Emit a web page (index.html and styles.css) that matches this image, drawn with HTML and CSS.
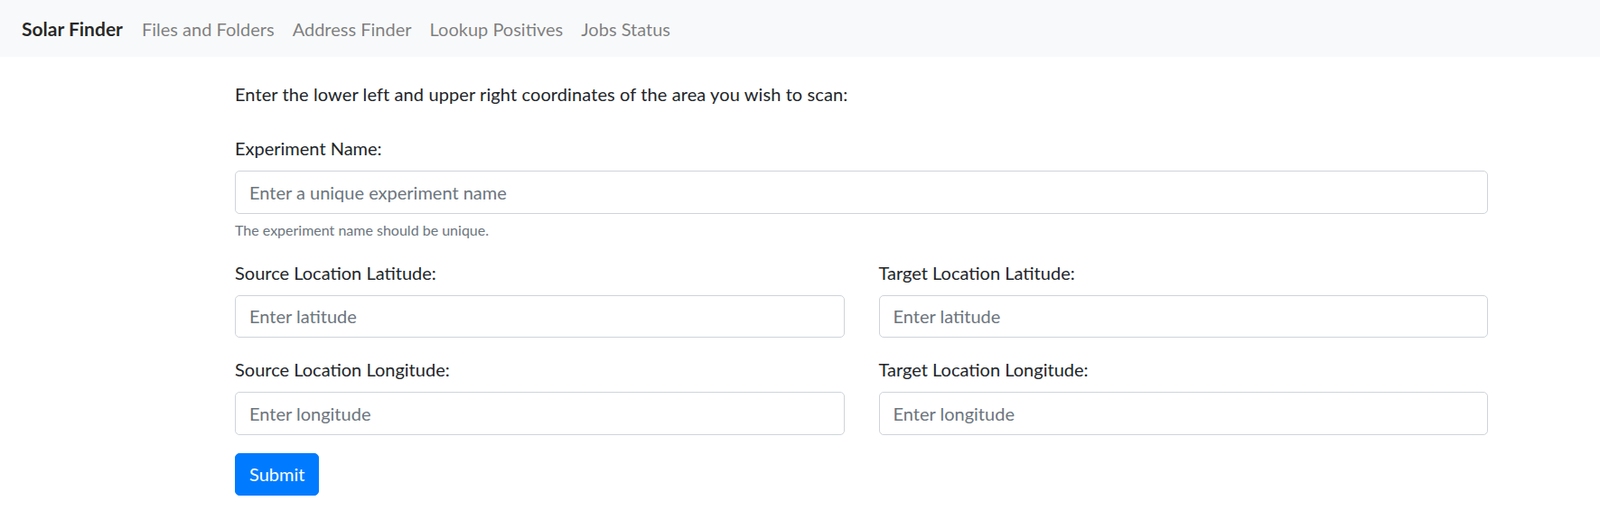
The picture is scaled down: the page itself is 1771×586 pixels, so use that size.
FILE: index.html
```html
<!DOCTYPE html>
<html lang="en">
<head>
<meta charset="utf-8">
<title>Solar Finder</title>
<link rel="stylesheet" href="styles.css">
</head>
<body>
<nav class="navbar">
  <a class="brand" href="#">Solar Finder</a>
  <ul class="nav">
    <li><a class="nav-link" href="#">Files and Folders</a></li>
    <li><a class="nav-link" href="#">Address Finder</a></li>
    <li><a class="nav-link" href="#">Lookup Positives</a></li>
    <li><a class="nav-link" href="#">Jobs Status</a></li>
  </ul>
</nav>
<main class="container">
  <p class="intro">Enter the lower left and upper right coordinates of the area you wish to scan:</p>
  <form class="form">
    <div class="form-group">
      <label class="label" for="exp">Experiment Name:</label>
      <input class="form-control" id="exp" type="text" placeholder="Enter a unique experiment name">
      <small class="form-text">The experiment name should be unique.</small>
    </div>
    <div class="grid">
      <div class="form-group">
        <label class="label" for="slat">Source Location Latitude:</label>
        <input class="form-control" id="slat" type="text" placeholder="Enter latitude">
      </div>
      <div class="form-group">
        <label class="label" for="tlat">Target Location Latitude:</label>
        <input class="form-control" id="tlat" type="text" placeholder="Enter latitude">
      </div>
      <div class="form-group">
        <label class="label" for="slon">Source Location Longitude:</label>
        <input class="form-control" id="slon" type="text" placeholder="Enter longitude">
      </div>
      <div class="form-group">
        <label class="label" for="tlon">Target Location Longitude:</label>
        <input class="form-control" id="tlon" type="text" placeholder="Enter longitude">
      </div>
    </div>
    <button class="btn" type="submit">Submit</button>
  </form>
</main>
</body>
</html>
```
FILE: styles.css
```css
* { box-sizing: border-box; }
html, body { margin: 0; padding: 0; }
body {
  font-family: "Lato", "Liberation Sans", sans-serif;
  font-size: 20px;
  line-height: 30px;
  color: #212529;
  background: #fff;
}
.navbar {
  display: flex;
  align-items: center;
  height: 63px;
  padding: 0 24px;
  background: #f8f9fa;
}
.brand {
  font-size: 21px;
  font-weight: 700;
  color: rgba(0, 0, 0, 0.85);
  text-decoration: none;
  margin-right: 21px;
}
.nav {
  display: flex;
  list-style: none;
  margin: 0;
  padding: 0;
  gap: 20px;
}
.nav-link {
  font-size: 20px;
  color: rgba(0, 0, 0, 0.5);
  text-decoration: none;
}
.container {
  width: 1387px;
  margin-left: 260px;
  padding-top: 26px;
}
.intro {
  margin: 0 0 30px;
  letter-spacing: 0.1px;
}
.form-group {
  margin-bottom: 20px;
}
.label {
  display: block;
  margin-bottom: 10px;
}
.form-control {
  display: block;
  width: 100%;
  height: 47.5px;
  padding: 7.5px 15px;
  font-family: inherit;
  font-size: 20px;
  line-height: 30px;
  color: #495057;
  background: #fff;
  border: 1px solid #ced4da;
  border-radius: 5px;
}
.form-control::placeholder {
  color: #6c757d;
  opacity: 1;
}
.form-text {
  display: block;
  margin-top: 6px;
  font-size: 16px;
  line-height: 24px;
  color: #6c757d;
}
.grid {
  display: grid;
  grid-template-columns: 1fr 1fr;
  column-gap: 38px;
}
.btn {
  display: inline-block;
  height: 47.5px;
  padding: 7.5px 15px;
  font-family: inherit;
  font-size: 20px;
  line-height: 30px;
  color: #fff;
  background: #007bff;
  border: 1px solid #007bff;
  border-radius: 5px;
  cursor: pointer;
}
```
